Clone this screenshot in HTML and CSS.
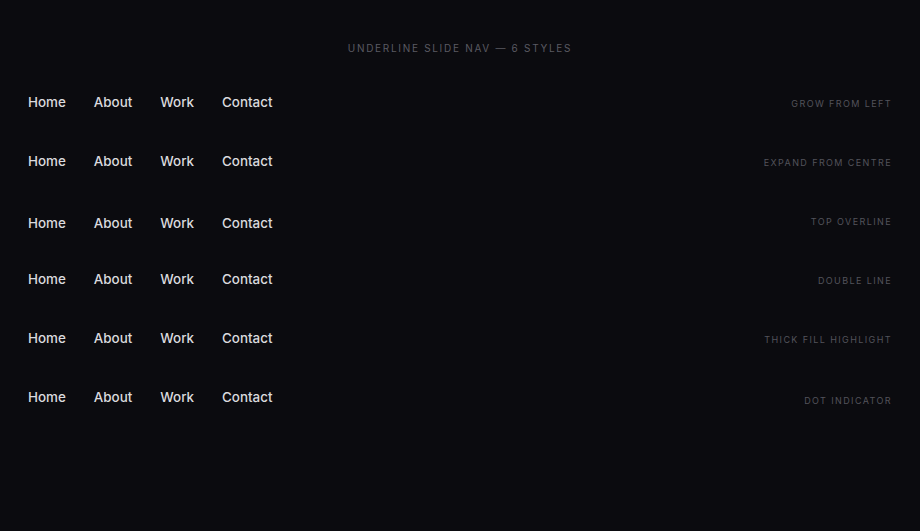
FILE: index.html
```html
<!DOCTYPE html>
<html>
<head>
    <title>Underline Slide Nav</title>
    <link rel="stylesheet" href="styles.css">
</head>
<body>
    <div class="page">
        <h1 class="title">Underline slide nav — 6 styles</h1>

        <div class="rows">
            <div class="row">
                <nav class="nav nav-grow">
                    <a href="#">Home</a>
                    <a href="#">About</a>
                    <a href="#">Work</a>
                    <a href="#">Contact</a>
                </nav>
                <span class="label">Grow from left</span>
            </div>

            <div class="row">
                <nav class="nav nav-centre">
                    <a href="#">Home</a>
                    <a href="#">About</a>
                    <a href="#">Work</a>
                    <a href="#">Contact</a>
                </nav>
                <span class="label">Expand from centre</span>
            </div>

            <div class="row">
                <nav class="nav nav-over">
                    <a href="#">Home</a>
                    <a href="#">About</a>
                    <a href="#">Work</a>
                    <a href="#">Contact</a>
                </nav>
                <span class="label">Top overline</span>
            </div>

            <div class="row">
                <nav class="nav nav-double">
                    <a href="#">Home</a>
                    <a href="#">About</a>
                    <a href="#">Work</a>
                    <a href="#">Contact</a>
                </nav>
                <span class="label">Double line</span>
            </div>

            <div class="row">
                <nav class="nav nav-fill">
                    <a href="#">Home</a>
                    <a href="#">About</a>
                    <a href="#">Work</a>
                    <a href="#">Contact</a>
                </nav>
                <span class="label">Thick fill highlight</span>
            </div>

            <div class="row row-dot">
                <nav class="nav nav-dot">
                    <a href="#">Home</a>
                    <a href="#">About</a>
                    <a href="#">Work</a>
                    <a href="#">Contact</a>
                </nav>
                <span class="label">Dot indicator</span>
            </div>
        </div>
    </div>
</body>
</html>
```

FILE: styles.css
```css
body {
    margin: 0;
    background-color: #0b0b0f;
    font-family: Inter, "Noto Sans", sans-serif;
    color: #d8d8dc;
}

.page {
    padding: 40px 28px;
}

.title {
    margin: 0 0 18px;
    text-align: center;
    font-size: 10px;
    line-height: 16px;
    font-weight: 400;
    letter-spacing: 1.7px;
    text-transform: uppercase;
    color: #5a5a62;
}

.row {
    display: flex;
    justify-content: space-between;
    align-items: center;
    height: 59px;
}

.row-dot {
    margin-top: 2px;
}

.nav {
    display: flex;
    gap: 28px;
}

.nav a {
    position: relative;
    display: block;
    color: #dadade;
    text-decoration: none;
    font-size: 13.4px;
    font-weight: 500;
    line-height: 20px;
    padding: 3px 0 7px;
}

.label {
    font-size: 9px;
    letter-spacing: 1.4px;
    text-transform: uppercase;
    color: #53535b;
}

/* 1 - grow from left */
.nav-grow a::after {
    content: "";
    position: absolute;
    left: 0;
    bottom: 0;
    width: 100%;
    height: 2px;
    background: #dadade;
    transform: scaleX(0);
    transform-origin: left;
    transition: transform 0.3s ease;
}

.nav-grow a:hover::after {
    transform: scaleX(1);
}

/* 2 - expand from centre */
.nav-centre a::after {
    content: "";
    position: absolute;
    left: 0;
    bottom: 0;
    width: 100%;
    height: 2px;
    background: #dadade;
    transform: scaleX(0);
    transition: transform 0.3s ease;
}

.nav-centre a:hover::after {
    transform: scaleX(1);
}

/* 3 - top overline */
.nav-over a {
    padding: 6px 0 4px;
}

.nav-over a::before {
    content: "";
    position: absolute;
    left: 0;
    top: 0;
    width: 100%;
    height: 2px;
    background: #dadade;
    transform: scaleX(0);
    transform-origin: right;
    transition: transform 0.3s ease;
}

.nav-over a:hover::before {
    transform: scaleX(1);
    transform-origin: left;
}

/* 4 - double line */
.nav-double a {
    padding: 4px 0 8px;
}

.nav-double a::before,
.nav-double a::after {
    content: "";
    position: absolute;
    left: 0;
    width: 100%;
    height: 1px;
    background: #dadade;
    transform: scaleX(0);
    transition: transform 0.3s ease;
}

.nav-double a::before {
    bottom: 4px;
    transform-origin: left;
}

.nav-double a::after {
    bottom: 0;
    transform-origin: right;
}

.nav-double a:hover::before,
.nav-double a:hover::after {
    transform: scaleX(1);
}

/* 5 - thick fill highlight */
.nav-fill a {
    padding: 4px 0 8px;
    z-index: 0;
}

.nav-fill a::after {
    content: "";
    position: absolute;
    left: -4px;
    right: -4px;
    bottom: 4px;
    height: 0;
    background: rgba(120, 110, 255, 0.35);
    z-index: -1;
    transition: height 0.3s ease;
}

.nav-fill a:hover::after {
    height: 60%;
}

/* 6 - dot indicator */
.nav-dot a {
    padding: 4px 0 12px;
}

.nav-dot a::after {
    content: "";
    position: absolute;
    left: 50%;
    bottom: 2px;
    width: 5px;
    height: 5px;
    margin-left: -2.5px;
    border-radius: 50%;
    background: #dadade;
    transform: scale(0);
    transition: transform 0.3s ease;
}

.nav-dot a:hover::after {
    transform: scale(1);
}
```
